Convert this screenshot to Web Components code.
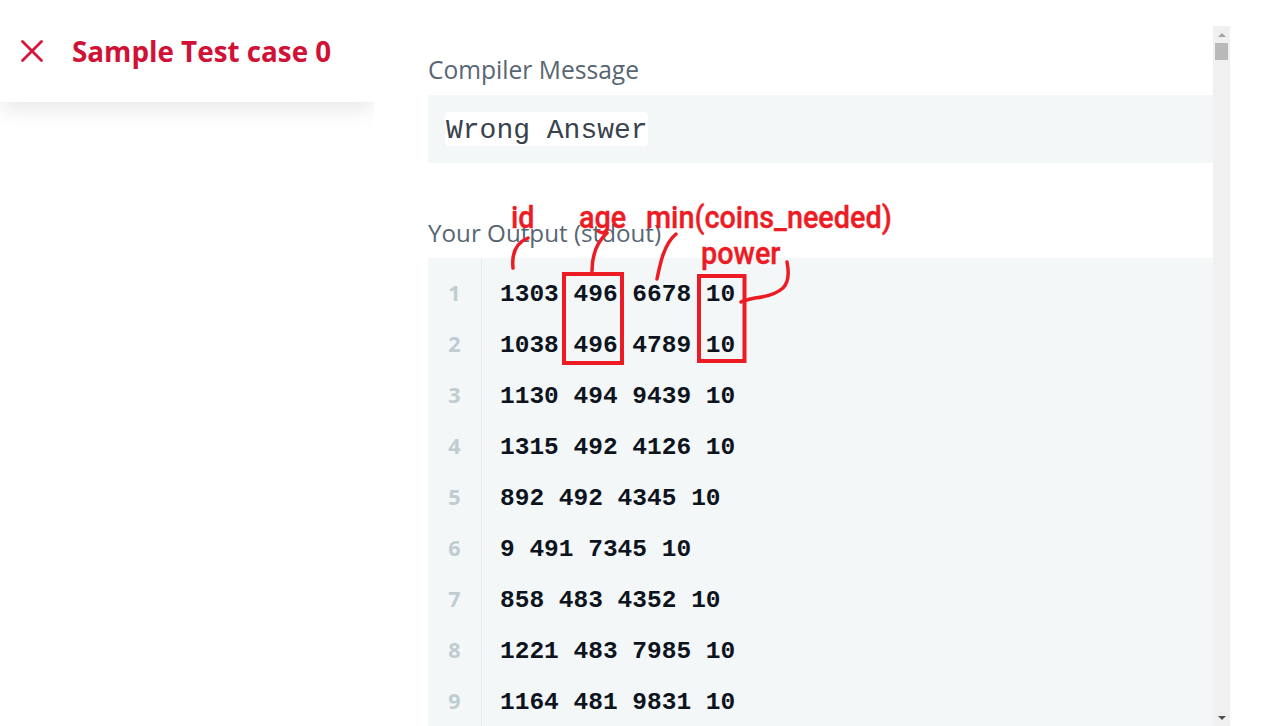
<!DOCTYPE html>
<html>
<head>
<meta charset="utf-8">
<title>Sample Test case 0</title>
<style>
    html, body { margin: 0; height: 100%; overflow: hidden; background: #fff; }
    body { font-family: "Open Sans", sans-serif; }
    .page { display: flex; align-items: flex-start; height: 726px; }
</style>
</head>
<body>
<div class="page">
    <case-header>Sample Test case 0</case-header>
    <result-pane>
        <result-section label="Compiler Message">
            <message-box>Wrong Answer</message-box>
        </result-section>
        <result-section label="Your Output (stdout)" spaced>
            <code-output lines="1303 496 6678 10|1038 496 4789 10|1130 494 9439 10|1315 492 4126 10|892 492 4345 10|9 491 7345 10|858 483 4352 10|1221 483 7985 10|1164 481 9831 10"></code-output>
        </result-section>
    </result-pane>
    <fake-scrollbar></fake-scrollbar>
</div>
<paint-notes></paint-notes>

<script>
class CaseHeader extends HTMLElement {
    constructor() {
        super();
        this.attachShadow({mode: 'open'}).innerHTML = `<style>
            :host {
                display: flex;
                flex: 0 0 374px;
                height: 102px;
                box-sizing: border-box;
                align-items: center;
                gap: 28px;
                padding: 0 0 0 20px;
                background: #fff;
                color: #cf1235;
                font-size: 27.8px;
                font-weight: 700;
                box-shadow: 0 6px 22px rgba(0, 0, 0, 0.1);
                clip-path: inset(0 0 -50px 0);
            }
            svg { width: 24px; height: 24px; display: block; }
        </style>
        <svg viewBox="0 0 24 24" fill="none" stroke="#d5163a" stroke-width="2.8" stroke-linecap="round">
            <path d="M2.500 2.500 L21.500 21.500 M21.500 2.500 L2.500 21.500"/>
        </svg>
        <slot></slot>`;
    }
}
customElements.define('case-header', CaseHeader);

class ResultPane extends HTMLElement {
    constructor() {
        super();
        this.attachShadow({mode: 'open'}).innerHTML = `<style>
            :host {
                display: block;
                flex: 0 0 785px;
                height: 700px;
                margin: 26px 0 0 54px;
                overflow: hidden;
            }
        </style><slot></slot>`;
    }
}
customElements.define('result-pane', ResultPane);

class ResultSection extends HTMLElement {
    constructor() {
        super();
        this.attachShadow({mode: 'open'}).innerHTML = `<style>
            :host { display: block; padding-top: 26px; }
            :host([spaced]) { padding-top: 52px; }
            .label {
                height: 43px;
                line-height: 36px;
                color: #586674;
                font-size: 24.6px;
            }
            :host([spaced]) .label { font-size: 24.2px; }
        </style>
        <div class="label"></div>
        <slot></slot>`;
        this.shadowRoot.querySelector('.label').textContent = this.getAttribute('label');
    }
}
customElements.define('result-section', ResultSection);

class MessageBox extends HTMLElement {
    constructor() {
        super();
        this.attachShadow({mode: 'open'}).innerHTML = `<style>
            :host {
                display: block;
                height: 68px;
                box-sizing: border-box;
                padding: 17px 0 0 17px;
                background: #f3f7f7;
            }
            span {
                display: inline-block;
                height: 34px;
                line-height: 37px;
                padding-left: 1px;
                border-radius: 4px;
                background: #fff;
                color: #39424e;
                font-family: "Liberation Mono", monospace;
                font-size: 28px;
            }
        </style><span><slot></slot></span>`;
    }
}
customElements.define('message-box', MessageBox);

class CodeOutput extends HTMLElement {
    constructor() {
        super();
        this.attachShadow({mode: 'open'}).innerHTML = `<style>
            :host {
                display: flex;
                background: #f3f7f7;
            }
            .gutter { padding-top: 9px; }
            .code { padding-top: 11px; }
            .gutter {
                flex: 0 0 54px;
                box-sizing: border-box;
                text-align: center;
                color: #bfcdd1;
                font-size: 21.5px;
                font-weight: 700;
                border-right: 1px solid #e6ebee;
            }
            .code {
                flex: 1;
                padding-left: 18px;
                color: #0e141e;
                font-family: "Liberation Mono", monospace;
                font-size: 24.5px;
                font-weight: 700;
            }
            .gutter div, .code div { height: 51px; line-height: 51px; white-space: pre; }
        </style><div class="gutter"></div><div class="code"></div>`;
        const gutter = this.shadowRoot.querySelector('.gutter');
        const code = this.shadowRoot.querySelector('.code');
        this.getAttribute('lines').split('|').forEach((line, i) => {
            gutter.insertAdjacentHTML('beforeend', `<div>${i + 1}</div>`);
            code.insertAdjacentHTML('beforeend', `<div>${line}</div>`);
        });
    }
}
customElements.define('code-output', CodeOutput);

class FakeScrollbar extends HTMLElement {
    constructor() {
        super();
        this.attachShadow({mode: 'open'}).innerHTML = `<style>
            :host {
                display: flex;
                flex-direction: column;
                align-items: center;
                justify-content: space-between;
                flex: 0 0 17px;
                box-sizing: border-box;
                height: 700px;
                margin-top: 26px;
                background: #f0f0f0;
            }
            .btn { height: 17px; display: flex; align-items: center; justify-content: center; }
            .btn i { display: block; width: 0; height: 0; border: 4px solid transparent; }
            .up i { border-top: 0; border-bottom: 4px solid #a3a3a3; }
            .down i { border-bottom: 0; border-top: 4px solid #505050; }
            .thumb { width: 13px; height: 17px; background: #b9b9b9; }
            .track { flex: 1; display: flex; flex-direction: column; }
        </style>
        <div class="btn up"><i></i></div>
        <div class="track"><div class="thumb"></div></div>
        <div class="btn down"><i></i></div>`;
    }
}
customElements.define('fake-scrollbar', FakeScrollbar);

class PaintNotes extends HTMLElement {
    constructor() {
        super();
        this.attachShadow({mode: 'open'}).innerHTML = `<style>
            :host { position: absolute; left: 0; top: 0; width: 1265px; height: 726px; pointer-events: none; }
            svg { position: absolute; left: 0; top: 0; }
            span {
                position: absolute;
                color: #ed1c24;
                font-family: Roboto, sans-serif;
                font-weight: 500;
                font-size: 32px;
                line-height: 32px;
                -webkit-text-stroke: 0.4px #ed1c24;
                transform-origin: 0 0;
                transform: scaleX(.9);
                white-space: nowrap;
            }
        </style>
        <svg width="1265" height="726" fill="none" stroke="#ed1c24">
            <rect x="564" y="274" width="58" height="89" stroke-width="4"/>
            <rect x="699" y="276" width="45.500" height="85" stroke-width="4"/>
            <g stroke-width="3.500" stroke-linecap="round" stroke-linejoin="round">
                <path d="M513 268 C512 258 513 244 528 238"/>
                <path d="M592 271 C592 258 596 243 607 233"/>
                <path d="M657 279 C660 264 664 244 676 234"/>
                <path d="M787 262 C789 272 789 282 783 288 C775 295 765 297 755 298 C750 299 745 300 741 302"/>
            </g>
        </svg>
        <span style="left:511px;top:201px">id</span>
        <span style="left:579px;top:201px">age</span>
        <span style="left:646px;top:201px">min(coins_needed)</span>
        <span style="left:701px;top:237px">power</span>`;
    }
}
customElements.define('paint-notes', PaintNotes);
</script>
</body>
</html>
